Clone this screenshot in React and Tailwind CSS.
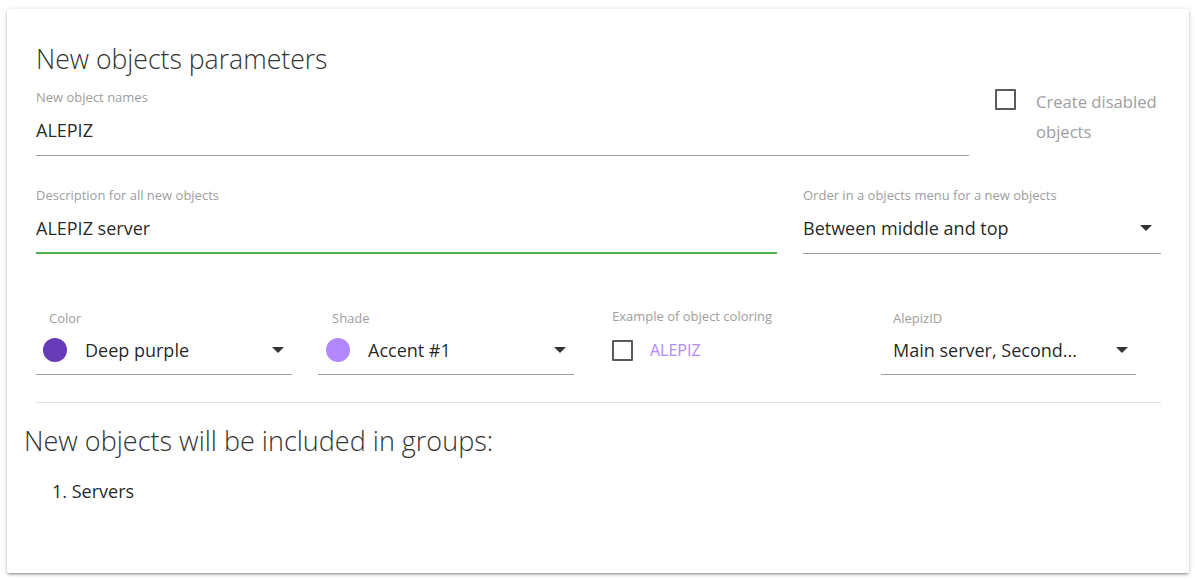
import React from "react";

const Arrow = () => (
  <svg width="12" height="6" viewBox="0 0 12 6" className="shrink-0">
    <path d="M0 0 L12 0 L6 6 Z" fill="#333" />
  </svg>
);

const Checkbox = ({ className = "" }) => (
  <div className={"w-[21px] h-[21px] border-2 border-[#5a5a5a] rounded-[1px] shrink-0 " + className} />
);

export default function App() {
  return (
    <div
      className="w-[1195px] h-[580px] bg-white pt-[9px] pl-[7px] overflow-hidden"
      style={{ fontFamily: '"Open Sans", "Noto Sans", sans-serif' }}
    >
      <div className="w-[1182px] h-[564px] bg-white rounded-[2px] shadow-[0_2px_2px_0_rgba(0,0,0,0.14),0_3px_1px_-2px_rgba(0,0,0,0.12),0_1px_5px_0_rgba(0,0,0,0.2)] pl-[29px] pt-[31px]">
        {/* Heading */}
        <div className="h-[36px] leading-[36px] text-[26.6px] font-light text-[#333] pt-[1px]">New objects parameters</div>

        {/* Row 1 */}
        <div className="flex mt-[12px]">
          <div className="w-[933px] pb-[13px] border-b border-[#9e9e9e]">
            <div className="h-[18px] leading-[18px] text-[13px] text-[#9e9e9e]">New object names</div>
            <div className="mt-[12px] h-[24px] leading-[24px] text-[18px] text-[rgba(0,0,0,0.87)]">ALEPIZ</div>
          </div>
          <div className="flex items-start ml-[26px] -mt-[1px]">
            <Checkbox className="mt-[2px]" />
            <div className="ml-[20px] text-[16.6px] leading-[30px] text-[#9e9e9e]">
              Create disabled
              <br />
              objects
            </div>
          </div>
        </div>

        {/* Row 2 */}
        <div className="flex mt-[30px] gap-[26px]">
          <div className="w-[741px] pb-[12px] border-b-2 border-[#4caf50]">
            <div className="h-[18px] leading-[18px] text-[13px] text-[#9e9e9e]">Description for all new objects</div>
            <div className="mt-[12px] h-[24px] leading-[24px] text-[18px] text-[rgba(0,0,0,0.87)]">ALEPIZ server</div>
          </div>
          <div className="w-[358px] pb-[13px] border-b border-[#9e9e9e]">
            <div className="h-[18px] leading-[18px] text-[13px] text-[#9e9e9e]">Order in a objects menu for a new objects</div>
            <div className="mt-[12px] h-[24px] flex items-center justify-between pr-[9px] text-[18px] text-[rgba(0,0,0,0.87)]">
              <span>Between middle and top</span>
              <Arrow />
            </div>
          </div>
        </div>

        {/* Row 3 */}
        <div className="flex mt-[55px] gap-[26px]">
          <div className="w-[256px] pb-[12px] border-b border-[#9e9e9e]">
            <div className="h-[18px] leading-[18px] text-[13px] text-[#9e9e9e] pl-[13px]">Color</div>
            <div className="mt-[11px] h-[24px] flex items-center pr-[8px] text-[18px] text-[rgba(0,0,0,0.87)]">
              <div className="w-[24px] h-[24px] rounded-full bg-[#673ab7] ml-[7px] shrink-0" />
              <span className="ml-[18px] flex-1">Deep purple</span>
              <Arrow />
            </div>
          </div>
          <div className="w-[256px] pb-[12px] border-b border-[#9e9e9e]">
            <div className="h-[18px] leading-[18px] text-[13px] text-[#9e9e9e] pl-[14px]">Shade</div>
            <div className="mt-[11px] h-[24px] flex items-center pr-[8px] text-[18px] text-[rgba(0,0,0,0.87)]">
              <div className="w-[24px] h-[24px] rounded-full bg-[#b388ff] ml-[8px] shrink-0" />
              <span className="ml-[18px] flex-1">Accent #1</span>
              <Arrow />
            </div>
          </div>
          <div className="w-[256px] pl-[12px]">
            <div className="h-[18px] leading-[18px] text-[13px] text-[#9e9e9e] -mt-[2px]">Example of object coloring</div>
            <div className="mt-[13px] h-[24px] flex items-center">
              <Checkbox />
              <span className="ml-[17px] text-[16px] text-[#b388ff]">ALEPIZ</span>
            </div>
          </div>
          <div className="w-[255px] -ml-[1px] pb-[12px] border-b border-[#9e9e9e]">
            <div className="h-[18px] leading-[18px] text-[13px] text-[#9e9e9e] pl-[12px]">AlepizID</div>
            <div className="mt-[11px] h-[24px] flex items-center pl-[12px] pr-[8px] text-[18px] text-[rgba(0,0,0,0.87)]">
              <span className="flex-1">Main server, Second...</span>
              <Arrow />
            </div>
          </div>
        </div>

        {/* Divider */}
        <div className="mt-[27px] w-[1125px] border-t border-[#e0e0e0]" />

        {/* Groups */}
        <div className="-ml-[12px] mt-[18px] h-[40px] leading-[40px] text-[27px] font-light text-[#333]">
          New objects will be included in groups:
        </div>
        <ol className="mt-[18px] ml-[16px] text-[18px] leading-[24px] text-[rgba(0,0,0,0.87)]">
          <li>1. Servers</li>
        </ol>
      </div>
    </div>
  );
}
